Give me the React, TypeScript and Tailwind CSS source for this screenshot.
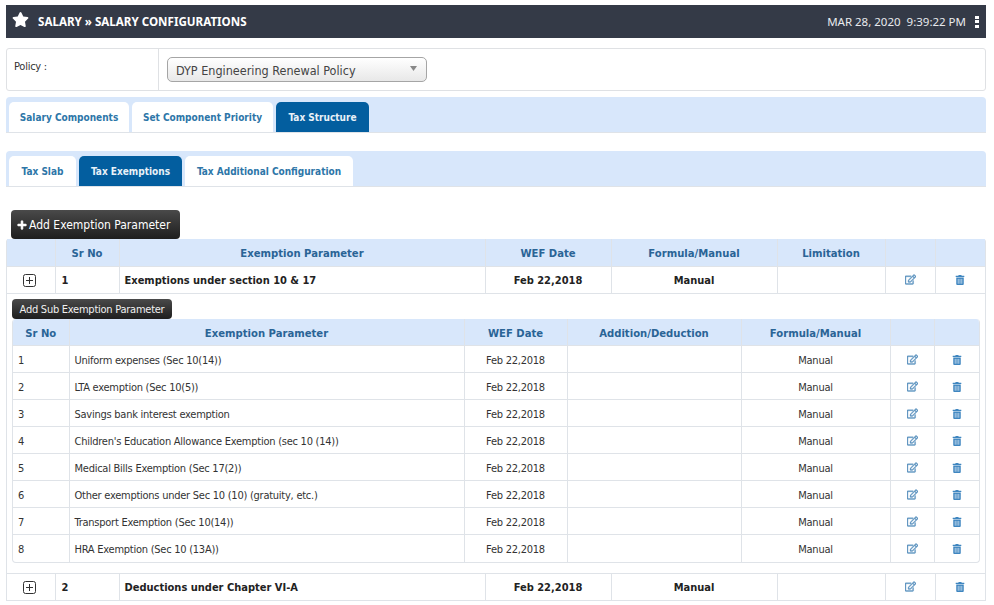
import { FaStar, FaPlus, FaRegEdit, FaTrashAlt } from "react-icons/fa";

const body = "font-['DejaVu_Sans_Condensed','DejaVu_Sans',sans-serif]";
const subRows = [
  "Uniform expenses (Sec 10(14))",
  "LTA exemption (Sec 10(5))",
  "Savings bank interest exemption",
  "Children's Education Allowance Exemption (sec 10 (14))",
  "Medical Bills Exemption (Sec 17(2))",
  "Other exemptions under Sec 10 (10) (gratuity, etc.)",
  "Transport Exemption (Sec 10(14))",
  "HRA Exemption (Sec 10 (13A))",
];

function Tab({ label, active, w }: { label: string; active?: boolean; w: string }) {
  return (
    <div
      className={
        "h-[30px] rounded-t-[5px] flex items-center justify-center text-[10px] font-bold " +
        w +
        (active ? " bg-[#035e9f] text-[#e8f1f8]" : " bg-white text-[#2d76a8]")
      }
    >
      {label}
    </div>
  );
}

function TabBar({ children, mt }: { children: React.ReactNode; mt: string }) {
  return (
    <div className={"h-[36px] bg-[#d8e7fb] rounded-t-[4px] border-b border-[#dfe3e8] pl-[3px] pt-[5px] flex gap-[3px] " + mt}>
      {children}
    </div>
  );
}

function PlusBox() {
  return (
    <svg width="13" height="13" viewBox="0 0 13 13" className="ml-[16px]">
      <rect x="0.5" y="0.5" width="12" height="12" rx="2" fill="#fff" stroke="#333" />
      <path d="M6.5 3v7M3 6.5h7" stroke="#333" strokeWidth="1" />
    </svg>
  );
}

function MainRow({ n, name }: { n: string; name: string }) {
  const c = "border-b border-r border-[#dfe3e8] text-[11px] font-bold text-[#222] pt-[4px]";
  return (
    <tr className="h-[27px]">
      <td className="border-b border-r border-[#dfe3e8] pt-[1px]"><PlusBox /></td>
      <td className={c + " pl-[6px]"}>{n}</td>
      <td className={c + " pl-[5px]"}>{name}</td>
      <td className={c + " text-center"}>Feb 22,2018</td>
      <td className={c + " text-center"}>Manual</td>
      <td className={c}></td>
      <td className="border-b border-r border-[#dfe3e8]"><FaRegEdit className="mx-auto text-[11px] text-[#5b93bf] stroke-[20px]" /></td>
      <td className="border-b border-[#dfe3e8]"><FaTrashAlt className="mx-auto text-[10px] text-[#3f86c0]" /></td>
    </tr>
  );
}

export default function App() {
  const th = "border-r border-b border-[#dfe3e8] text-[11.2px] font-bold text-[#2a6496] text-center pt-[5px]";
  const cellText = "border-r border-[#dfe3e8] text-[11px] tracking-[-0.25px] text-[#333] pt-[4px]";
  return (
    <div className={"h-[605px] w-[994px] overflow-hidden bg-white pl-[6px] pr-[8px] pt-[5px] " + body}>
      <div className="h-[33px] bg-[#343a47] flex items-center text-white font-['Noto_Sans',sans-serif]">
        <FaStar className="ml-[6px] text-[17px] -mt-[4px]" />
        <div className="ml-[9px] text-[11.6px] font-bold">SALARY » SALARY CONFIGURATIONS</div>
        <div className="ml-auto text-[11.5px] text-[#e8eaee] whitespace-pre">MAR 28, 2020  9:39:22 PM</div>
        <div className="ml-[9px] mr-[7px] flex flex-col gap-[1.5px]">
          <div className="w-[4px] h-[3px] bg-white" />
          <div className="w-[4px] h-[3px] bg-white" />
          <div className="w-[4px] h-[3px] bg-white" />
        </div>
      </div>

      <div className="mt-[10px] h-[43px] border border-[#dfe1e4] rounded-[3px] flex">
        <div className="w-[152px] border-r border-[#dfe1e4] pl-[7px] pt-[10px] text-[11px] tracking-[-0.25px] text-[#333]">Policy :</div>
        <div className="pl-[8px] pt-[8px]">
          <div className="w-[260px] h-[25px] pt-[3px] rounded-[5px] border border-[#a5a5a5] bg-gradient-to-b from-white to-[#e8e8e8] flex items-center pl-[8px] pr-[9px] text-[12.5px] text-[#444]">
            DYP Engineering Renewal Policy
            <svg width="7" height="5" viewBox="0 0 7 5" className="ml-auto -mt-[6px]"><path d="M0 0h7L3.5 5z" fill="#888" /></svg>
          </div>
        </div>
      </div>

      <TabBar mt="mt-[6px]">
        <Tab label="Salary Components" w="w-[120px]" />
        <Tab label="Set Component Priority" w="w-[141px]" />
        <Tab label="Tax Structure" active w="w-[93px]" />
      </TabBar>
      <TabBar mt="mt-[18px]">
        <Tab label="Tax Slab" w="w-[67px]" />
        <Tab label="Tax Exemptions" active w="w-[103px]" />
        <Tab label="Tax Additional Configuration" w="w-[168px]" />
      </TabBar>

      <div className="mt-[23px] ml-[5px] w-[169px] h-[29px] rounded-[4px] bg-gradient-to-b from-[#4a4a4a] to-[#1e1e1e] text-white text-[12px] flex items-center pl-[6px] gap-[2px]">
        <FaPlus className="text-[10px] stroke-[30px]" />
        Add Exemption Parameter
      </div>

      <div className="border-l border-r border-[#dfe3e8] rounded-t-[3px]">
        <table className="w-[978px] table-fixed border-collapse">
          <colgroup>
            <col className="w-[48px]" /><col className="w-[64px]" /><col className="w-[366px]" /><col className="w-[126px]" />
            <col className="w-[166px]" /><col className="w-[108px]" /><col className="w-[50px]" /><col className="w-[50px]" />
          </colgroup>
          <tbody>
            <tr className="h-[27px] bg-[#d8e7fb]">
              <th className={th}></th>
              <th className={th}>Sr No</th>
              <th className={th}>Exemption Parameter</th>
              <th className={th}>WEF Date</th>
              <th className={th}>Formula/Manual</th>
              <th className={th}>Limitation</th>
              <th className={th}></th>
              <th className="border-b border-[#dfe3e8]"></th>
            </tr>
            <MainRow n="1" name="Exemptions under section 10 & 17" />
            <tr>
              <td colSpan={8} className="h-[280px] p-0 align-top border-b border-[#dfe3e8]">
                <div className="ml-[5px] mt-[5px] w-[160px] h-[20px] pt-[3px] rounded-[4px] bg-gradient-to-b from-[#4a4a4a] to-[#1e1e1e] text-[#f0f0f0] text-[11px] tracking-[-0.25px] flex items-center justify-center">
                  Add Sub Exemption Parameter
                </div>
                <div className="ml-[5px] w-[968px] border-l border-r border-b border-[#dfe3e8] rounded-[4px] overflow-hidden">
                  <table className="w-[966px] table-fixed border-collapse">
                    <colgroup>
                      <col className="w-[56px]" /><col className="w-[395px]" /><col className="w-[103px]" /><col className="w-[174px]" />
                      <col className="w-[149px]" /><col className="w-[44px]" /><col className="w-[45px]" />
                    </colgroup>
                    <tbody>
                      <tr className="h-[27px] bg-[#d8e7fb]">
                        <th className={th}>Sr No</th>
                        <th className={th}>Exemption Parameter</th>
                        <th className={th}>WEF Date</th>
                        <th className={th}>Addition/Deduction</th>
                        <th className={th}>Formula/Manual</th>
                        <th className={th}></th>
                        <th className="border-b border-[#dfe3e8]"></th>
                      </tr>
                      {subRows.map((r, i) => {
                        const line = i < 7 ? " border-b" : "";
                        return (
                          <tr key={r} className="h-[27px]">
                            <td className={cellText + line + " pl-[5px]"}>{i + 1}</td>
                            <td className={cellText + line + " pl-[5px]"}>{r}</td>
                            <td className={cellText + line + " text-center"}>Feb 22,2018</td>
                            <td className={cellText + line}></td>
                            <td className={cellText + line + " text-center"}>Manual</td>
                            <td className={"border-r border-[#dfe3e8] pt-[1px]" + line}>
                              <FaRegEdit className="mx-auto text-[11px] text-[#5b93bf] stroke-[20px]" />
                            </td>
                            <td className={"border-[#dfe3e8] pt-[2px]" + line}>
                              <FaTrashAlt className="mx-auto text-[10px] text-[#3f86c0]" />
                            </td>
                          </tr>
                        );
                      })}
                    </tbody>
                  </table>
                </div>
              </td>
            </tr>
            <MainRow n="2" name="Deductions under Chapter VI-A" />
          </tbody>
        </table>
      </div>
    </div>
  );
}
